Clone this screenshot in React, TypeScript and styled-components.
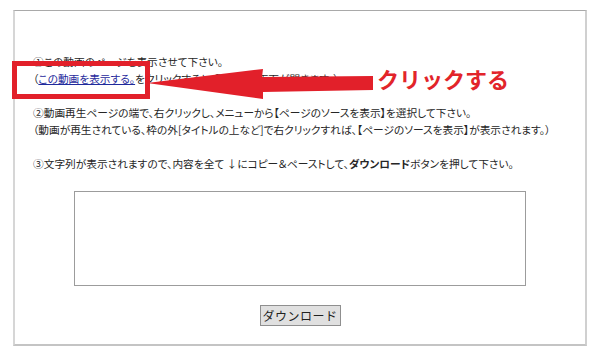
import React from 'react'
import styled, { createGlobalStyle } from 'styled-components'

const GlobalStyle = createGlobalStyle`
    html, body {
        margin: 0;
        padding: 0;
        background: #ffffff;
    }
    body {
        font-family: "Noto Sans CJK JP", "Noto Sans", sans-serif;
    }
`

const Page = styled.div`
    position: relative;
    width: 600px;
    height: 356px;
    overflow: hidden;
    background: #ffffff;
`

const Frame = styled.div`
    box-sizing: border-box;
    width: 574px;
    height: 336px;
    margin: 10px 0 0 13px;
    padding: 42px 18px 0;
    border-top: 1px solid #a9a9a9;
    border-left: 2px solid #d6d6d6;
    border-right: 2px solid #d0d0d0;
    border-bottom: 2px solid #c4c4c4;
    display: flex;
    flex-direction: column;
`

const Step = styled.p<{ $gap?: number }>`
    margin: 0 0 ${(p) => p.$gap ?? 0}px;
    font-size: 10.7px;
    line-height: 17px;
    color: #262626;
    font-feature-settings: 'palt';
    white-space: nowrap;
`

const VideoLink = styled.a`
    color: #1f2a9c;
    text-decoration: underline;
`

const Strong = styled.b`
    font-weight: 700;
`

const SourceBox = styled.textarea`
    box-sizing: border-box;
    align-self: center;
    width: 452px;
    height: 95px;
    margin-top: 19px;
    border: 1px solid #9c9c9c;
    resize: none;
    outline: none;
`

const DownloadButton = styled.button`
    box-sizing: border-box;
    align-self: center;
    width: 81px;
    height: 21px;
    margin-top: 19px;
    padding: 0;
    border: 1px solid #8f8f8f;
    background: #e0e0e0;
    color: #222222;
    font-family: "Noto Sans CJK JP", sans-serif;
    font-size: 12px;
    line-height: 19px;
    letter-spacing: 0.5px;
`

const Highlight = styled.div`
    position: absolute;
    left: 12px;
    top: 61px;
    width: 138px;
    height: 38px;
    box-sizing: border-box;
    border: 5px solid #e2202a;
`

const Pointer = styled.svg`
    position: absolute;
    left: 0;
    top: 0;
`

const Callout = styled.span`
    position: absolute;
    left: 377px;
    top: 63px;
    font-family: "Noto Sans CJK JP", sans-serif;
    font-size: 22px;
    line-height: 30px;
    font-weight: 700;
    color: #e2242a;
`

export default function App() {
    return (
        <Page>
            <GlobalStyle />
            <Frame>
                <Step>①この動画のページを表示させて下さい。</Step>
                <Step $gap={17}>
                    （<VideoLink href="#">この動画を表示する。</VideoLink>をクリックすると、動画再生画面が開きます。）
                </Step>
                <Step>②動画再生ページの端で、右クリックし、メニューから【ページのソースを表示】を選択して下さい。</Step>
                <Step $gap={17}>
                    （動画が再生されている、枠の外[タイトルの上など]で右クリックすれば、【ページのソースを表示】が表示されます。）
                </Step>
                <Step>
                    ③文字列が表示されますので、内容を全て ↓にコピー＆ペーストして、<Strong>ダウンロード</Strong>ボタンを押して下さい。
                </Step>
                <SourceBox />
                <DownloadButton>ダウンロード</DownloadButton>
            </Frame>

            <Highlight />
            <Pointer width="600" height="356" viewBox="0 0 600 356">
                <polygon
                    points="147,83 263,69 262,77 373,76 373,90 263,92 263,99"
                    fill="#e2202a"
                />
            </Pointer>
            <Callout>クリックする</Callout>
        </Page>
    )
}
